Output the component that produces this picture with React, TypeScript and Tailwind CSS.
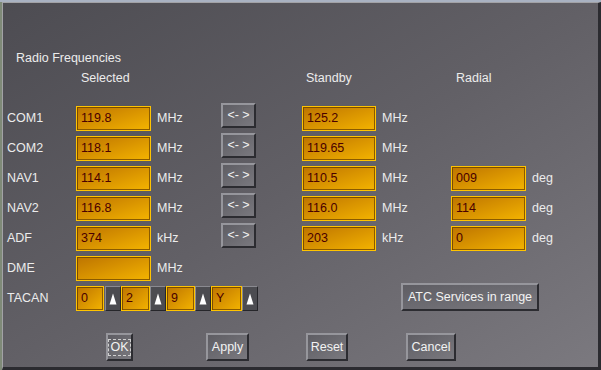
const font = "font-['Liberation_Sans',Arial,sans-serif]";

const rows = [
  { name: 'COM1', sel: '119.8', unit: 'MHz', swap: true, sby: '125.2' },
  { name: 'COM2', sel: '118.1', unit: 'MHz', swap: true, sby: '119.65' },
  { name: 'NAV1', sel: '114.1', unit: 'MHz', swap: true, sby: '110.5', radial: '009' },
  { name: 'NAV2', sel: '116.8', unit: 'MHz', swap: true, sby: '116.0', radial: '114' },
  { name: 'ADF', sel: '374', unit: 'kHz', swap: true, sby: '203', radial: '0' },
  { name: 'DME', sel: '', unit: 'MHz', swap: false },
];

function Field({ value, w }: { value: string; w: string }) {
  return (
    <div
      className={`${w} h-[25px] shrink-0 flex items-center pl-[4px] border border-[#ffc400] bg-linear-to-br from-[#bd7400] to-[#f4b400] shadow-[inset_1px_1px_0_#7a4c00,inset_-1px_-1px_0_#8a5a00] text-[12.5px] text-[#4a0000]`}
    >
      {value}
    </div>
  );
}

function Btn({ children, w, h = 'h-[25px]' }: { children: React.ReactNode; w: string; h?: string }) {
  return (
    <div
      className={`${w} ${h} shrink-0 flex items-center justify-center border-2 border-t-[#96969c] border-l-[#96969c] border-r-[#2c2c31] border-b-[#2c2c31] bg-linear-to-br from-[#5e5d63] to-[#7a797f] text-[12.5px] text-[#f2f2f2]`}
    >
      {children}
    </div>
  );
}

function Arrow() {
  return (
    <div className="w-[16px] h-[25px] shrink-0 flex items-center justify-center border border-t-[#8a8a90] border-l-[#8a8a90] border-r-[#26262a] border-b-[#26262a] bg-[#4c4c51]">
      <svg width="8" height="12" viewBox="0 0 8 12">
        <path d="M4 0.5 L7.5 11.5 L0.5 11.5 Z" fill="#ffffff" />
      </svg>
    </div>
  );
}

export default function App() {
  return (
    <div className={`w-[601px] h-[370px] bg-[#a9b2c2] pt-[2px] ${font}`}>
      <div className="flex h-[368px]">
        <div className="w-[2px] bg-[#7f8a78]" />
        <div className="w-[599px] h-[368px] border-l border-t border-[#a2a2a6] border-r-[3px] border-r-[#2b2b30] border-b-[3px] border-b-[#2b2b30] bg-linear-to-br from-[#4d4c52] via-[#626066] to-[#7b797f] text-[12.5px] text-[#ececec] leading-[15px]">
          <div className="pt-[48px] pl-[13px]">Radio Frequencies</div>
          <div className="flex mt-[5px]">
            <div className="w-[78px]" />
            <div className="w-[225px]">Selected</div>
            <div className="w-[150px]">Standby</div>
            <div>Radial</div>
          </div>

          <div className="mt-[17px]">
            {rows.map((r) => (
              <div key={r.name} className="flex h-[30px] items-start pl-[3px]">
                <div className="w-[70px] h-[25px] mt-[3px] pl-[1px] flex items-center shrink-0">{r.name}</div>
                <div className="mt-[3px]">
                  <Field value={r.sel} w="w-[75px]" />
                </div>
                <div className="w-[70px] pl-[6px] h-[25px] mt-[3px] flex items-center shrink-0">{r.unit}</div>
                <div className="w-[35px] shrink-0">
                  {r.swap && <Btn w="w-[35px]">&lt;- &gt;</Btn>}
                </div>
                {r.sby && (
                  <>
                    <div className="ml-[46px] mt-[3px]">
                      <Field value={r.sby} w="w-[74px]" />
                    </div>
                    <div className="w-[75px] pl-[6px] h-[25px] mt-[3px] flex items-center shrink-0">{r.unit}</div>
                  </>
                )}
                {r.radial && (
                  <>
                    <div className="mt-[3px]">
                      <Field value={r.radial} w="w-[75px]" />
                    </div>
                    <div className="pl-[6px] h-[25px] mt-[3px] flex items-center">deg</div>
                  </>
                )}
              </div>
            ))}

            <div className="flex h-[30px] items-start pl-[3px]">
              <div className="w-[70px] h-[25px] mt-[3px] pl-[1px] flex items-center shrink-0">TACAN</div>
              <div className="flex mt-[3px] w-[325px] shrink-0">
                <Field value="0" w="w-[28px]" />
                <div className="ml-[1px]"><Arrow /></div>
                <Field value="2" w="w-[29px]" />
                <Arrow />
                <Field value="9" w="w-[29px]" />
                <Arrow />
                <Field value="Y" w="w-[31px]" />
                <Arrow />
              </div>
              <Btn w="w-[138px]" h="h-[28px]">ATC Services in range</Btn>
            </div>
          </div>

          <div className="flex mt-[20px] pl-[103px]">
            <div className="w-[100px]">
              <Btn w="w-[27px]" h="h-[28px]">
                <span className="outline outline-1 outline-dashed outline-[#d0d0d0] px-[1px]">OK</span>
              </Btn>
            </div>
            <div className="w-[100px]">
              <Btn w="w-[43px]" h="h-[28px]">Apply</Btn>
            </div>
            <div className="w-[100px]">
              <Btn w="w-[42px]" h="h-[28px]">Reset</Btn>
            </div>
            <div className="w-[100px]">
              <Btn w="w-[50px]" h="h-[28px]">Cancel</Btn>
            </div>
          </div>
        </div>
      </div>
    </div>
  );
}
